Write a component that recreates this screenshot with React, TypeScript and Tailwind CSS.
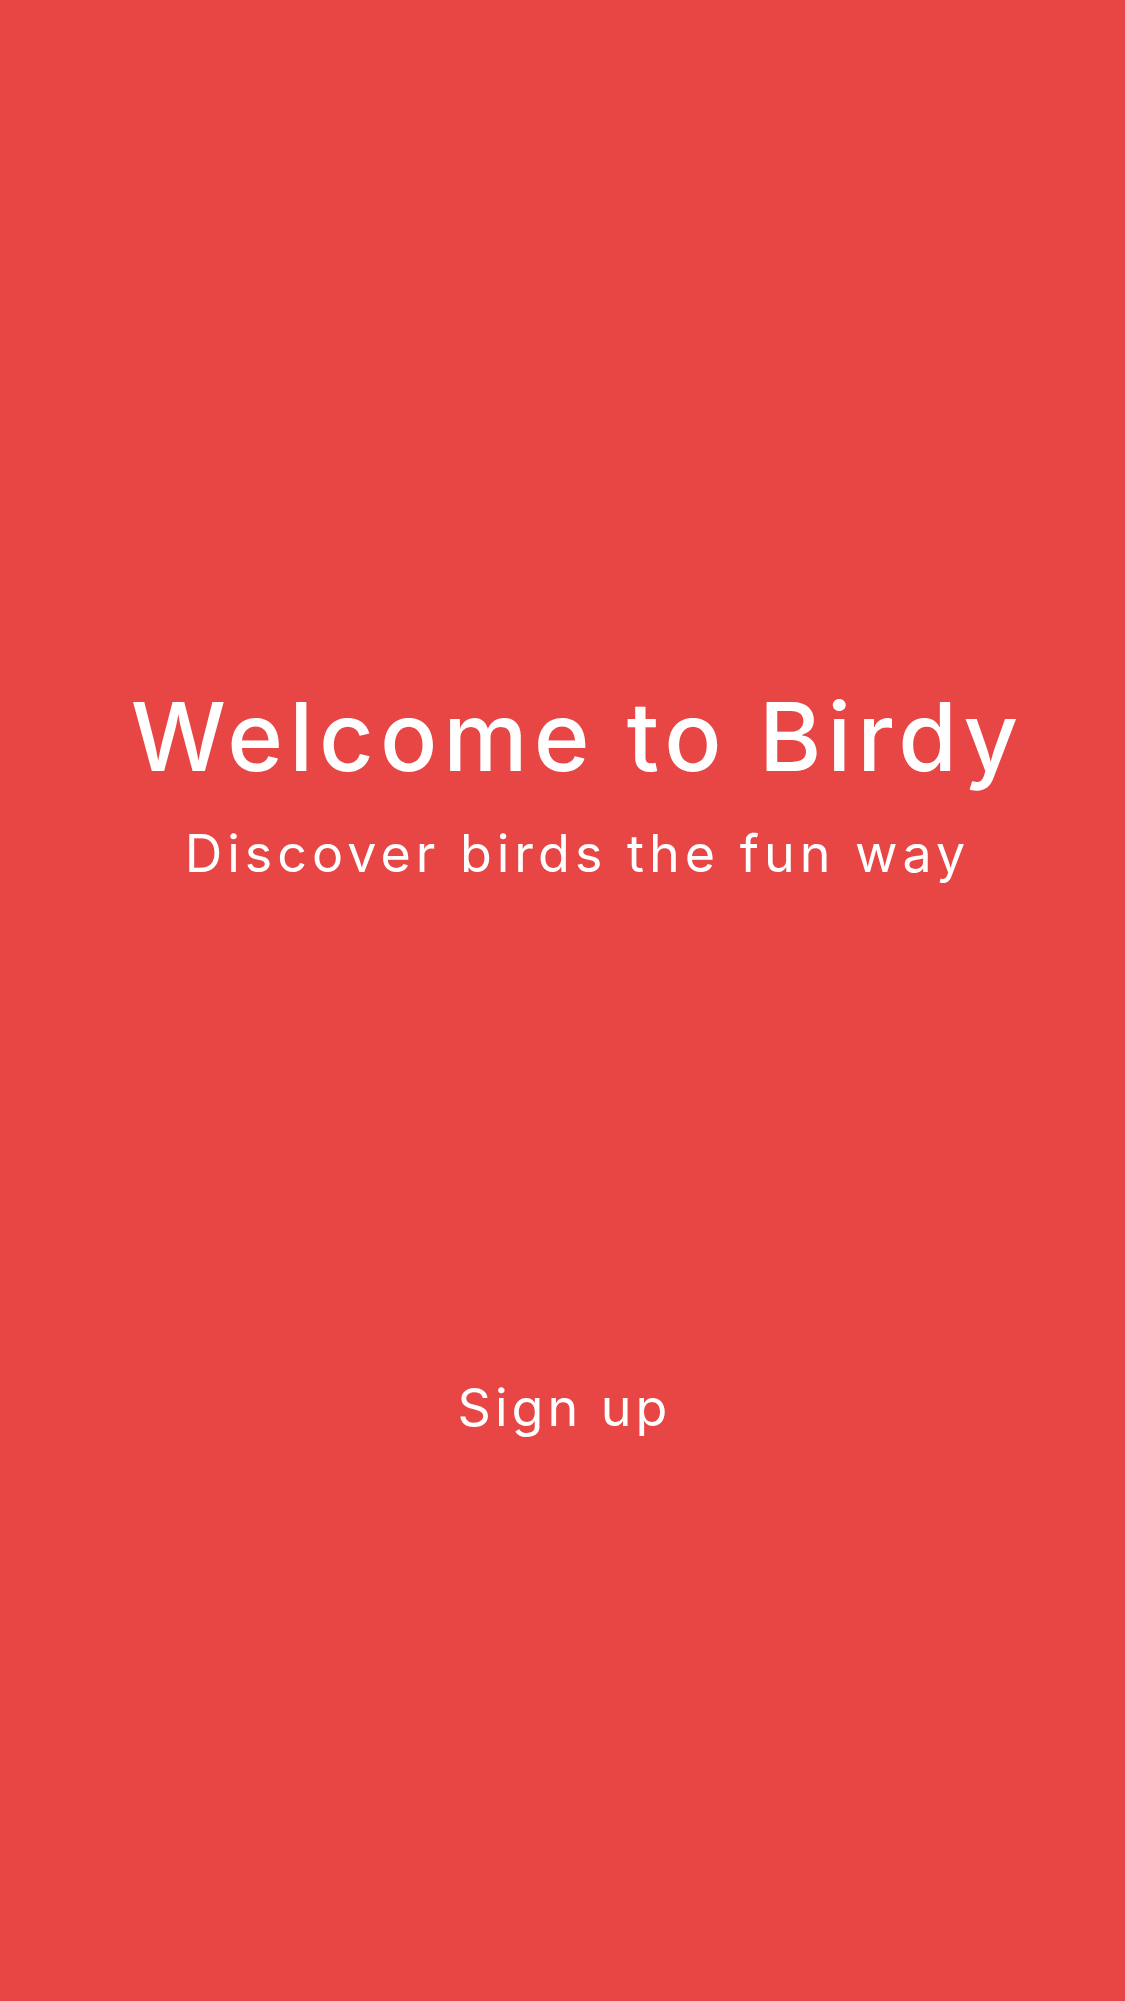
import React from "react";

export default function App() {
  return (
    <div
      className="w-full h-[2001px] bg-[#e84545] text-white flex flex-col items-center"
      style={{ fontFamily: "Inter, Lato, sans-serif" }}
    >
      <div className="mt-[689px] flex flex-col items-center pl-[30px]">
        <h1 className="text-[95px] leading-none font-medium tracking-[6px]">Welcome to Birdy</h1>
        <p className="mt-[44px] text-[52px] leading-none tracking-[5px]">Discover birds the fun way</p>
      </div>
      <button className="mt-[502px] text-[52px] leading-none tracking-[4px] pl-[4px] text-white">Sign up</button>
    </div>
  );
}
